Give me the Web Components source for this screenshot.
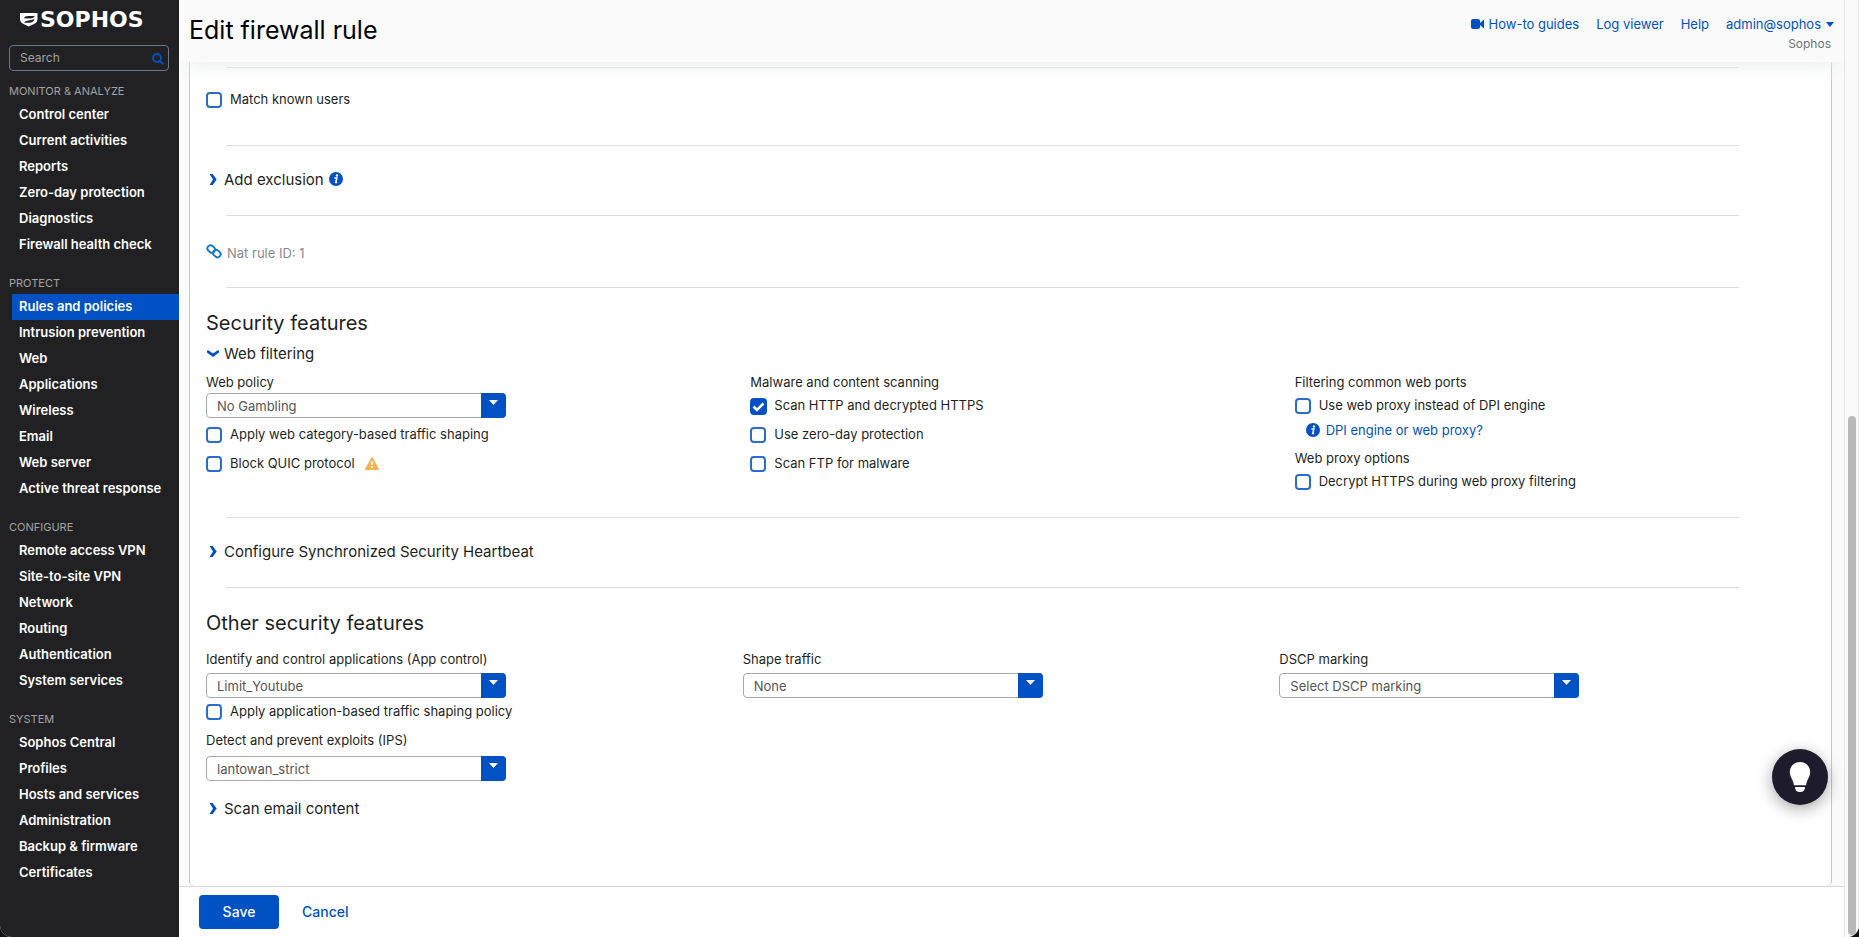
<!DOCTYPE html>
<html lang="en">
<head>
<meta charset="utf-8">
<meta name="viewport" content="width=device-width, initial-scale=1">
<title>Edit firewall rule</title>
<style>
  :root {
    --blue: #0052c4;
    --ink: #1d1f24;
    --muted: #8a8a8a;
    --side: #212124;
    --line: #dcdcdc;
  }
  body { margin: 0; background: #111; color: var(--ink); font: 13px/20px Inter, "Liberation Sans", sans-serif; }
</style>
</head>
<body>
<app-shell>
  <side-nav slot="nav">
    <nav-group label="MONITOR &amp; ANALYZE">
      <nav-item>Control center</nav-item>
      <nav-item>Current activities</nav-item>
      <nav-item>Reports</nav-item>
      <nav-item>Zero-day protection</nav-item>
      <nav-item>Diagnostics</nav-item>
      <nav-item>Firewall health check</nav-item>
    </nav-group>
    <nav-group label="PROTECT">
      <nav-item current>Rules and policies</nav-item>
      <nav-item>Intrusion prevention</nav-item>
      <nav-item>Web</nav-item>
      <nav-item>Applications</nav-item>
      <nav-item>Wireless</nav-item>
      <nav-item>Email</nav-item>
      <nav-item>Web server</nav-item>
      <nav-item>Active threat response</nav-item>
    </nav-group>
    <nav-group label="CONFIGURE">
      <nav-item>Remote access VPN</nav-item>
      <nav-item>Site-to-site VPN</nav-item>
      <nav-item>Network</nav-item>
      <nav-item>Routing</nav-item>
      <nav-item>Authentication</nav-item>
      <nav-item>System services</nav-item>
    </nav-group>
    <nav-group label="SYSTEM">
      <nav-item>Sophos Central</nav-item>
      <nav-item>Profiles</nav-item>
      <nav-item>Hosts and services</nav-item>
      <nav-item>Administration</nav-item>
      <nav-item>Backup &amp; firmware</nav-item>
      <nav-item>Certificates</nav-item>
    </nav-group>
  </side-nav>
  <page-header slot="header">Edit firewall rule</page-header>
  <rule-form slot="content"></rule-form>
  <action-bar slot="footer"></action-bar>
</app-shell>

<script>
const define = (name, html, setup) => {
  const template = document.createElement('template');
  template.innerHTML = html;
  customElements.define(name, class extends HTMLElement {
    connectedCallback() {
      if (this.shadowRoot) return;
      const root = this.attachShadow({ mode: 'open' });
      root.append(template.content.cloneNode(true));
      if (setup) setup(root, this);
    }
  });
};

define('app-shell', `
<style>
  :host { display: flex; height: 100vh; overflow: hidden; position: relative; border-radius: 0 0 12px 12px; background: #fafafa; }
  .side { flex: 0 0 179px; background: var(--side); position: relative; z-index: 2; }
  .main { flex: 1; min-width: 0; display: flex; flex-direction: column; }
  .content { flex: 1; min-height: 0; overflow: hidden; }
  .track { box-sizing: border-box; flex: 0 0 15px; display: flex; flex-direction: column; align-items: center; position: relative; z-index: 2;
    border: solid #e3e3e3; border-width: 0 1px; background: #fafafa; padding-bottom: 2px; }
  .before { flex: 416; }
  .thumb { flex: 519; width: 8px; border-radius: 4px; background: #b9b9b9; }
  help-bubble { position: absolute; right: 31px; bottom: 132px; z-index: 3; }
</style>
<div class="side"><slot name="nav"></slot></div>
<div class="main">
  <slot name="header"></slot>
  <div class="content"><slot name="content"></slot></div>
  <slot name="footer"></slot>
</div>
<div class="track"><div class="before"></div><div class="thumb"></div></div>
<help-bubble></help-bubble>`);

define('side-nav', `
<style>
  :host { display: block; }
  .brand { display: flex; align-items: center; gap: 2px; height: 31px; padding: 4px 0 0 20px; color: #fff;
    font: bold 22px/31px "DejaVu Sans", sans-serif; }
  .search { box-sizing: border-box; display: flex; align-items: center; width: 160px; height: 26px; margin: 10px 0 0 9px;
    padding: 0 4px 0 10px; border: 1px solid #6a7885; border-radius: 4px; }
  input { flex: 1; min-width: 0; padding: 0; border: 0; outline: 0; background: none; color: #ddd; font: 12px/20px Inter, sans-serif; }
  input::placeholder { color: #a0a0a0; opacity: 1; }
  .search svg { flex: none; margin-top: 1px; }
  nav { display: block; margin-top: -5px; }
</style>
<div class="brand">
  <svg width="18" height="14" viewBox="0 0 18 14" aria-hidden="true"><path fill="#fff" d="M0 0h17.500v6.500q0 2.800-3 4.200L8.700 13.600 3 10.700Q0 9.300 0 6.500z"/><path fill="#212124" d="M3.500 5.200Q5 3 8 3h7q-1.500 2.400-4.500 2.400zM14.500 6.200Q13 9.800 9.500 9.800H4q1.500-2.200 4.500-2.300z"/></svg>
  <span>SOPHOS</span>
</div>
<div class="search">
  <input type="text" placeholder="Search" aria-label="Search">
  <svg width="12" height="12" viewBox="0 0 12 12" fill="none" stroke="#0052c4" stroke-width="1.900" aria-hidden="true"><circle cx="5" cy="5" r="4"/><path d="M8 8l3.500 3.500"/></svg>
</div>
<nav><slot></slot></nav>`);

define('nav-group', `
<style>
  :host { display: block; }
  h2 { margin: 0; height: 20px; padding: 16px 0 0 9px; font: 11px/18px Inter, sans-serif; color: #a3a3a3; }
</style>
<h2></h2><slot></slot>`, (root, el) => { root.querySelector('h2').textContent = el.getAttribute('label'); });

define('nav-item', `
<style>
  :host { display: block; margin-left: 12px; }
  :host([current]) { background: var(--blue); }
  a { display: block; padding: 0 0 2px 7px; color: #fff; text-decoration: none; font: 600 13px/24px Inter, sans-serif; }
</style>
<a href="#"><slot></slot></a>`);

define('page-header', `
<style>
  :host { flex: none; display: flex; justify-content: space-between; box-sizing: border-box; height: 62px; padding: 0 10px 0 10px;
    background: #fafafa; position: relative; z-index: 1; box-shadow: 0 12px 20px -8px #e9eeec; }
  h1 { margin: 0; font: 400 25px/60px Inter, sans-serif; color: #000; }
  .right { padding-top: 14px; }
  .links { display: flex; gap: 17px; }
  a { display: flex; align-items: center; color: var(--blue); text-decoration: none; }
  .video { margin-right: 5px; }
  .caret { margin-left: 5px; }
  .tenant { padding-right: 3px; text-align: right; font-size: 12px; color: #6d7479; }
</style>
<h1><slot></slot></h1>
<div class="right">
  <div class="links">
    <a href="#"><svg class="video" width="13" height="10" viewBox="0 0 13 10" fill="currentColor" aria-hidden="true"><rect width="9" height="10" rx="2"/><path d="M9 4l4-3.500v9L9 6z"/></svg>How-to guides</a>
    <a href="#">Log viewer</a>
    <a href="#">Help</a>
    <a href="#">admin@sophos<svg class="caret" width="8" height="5" viewBox="0 0 8 5" fill="currentColor" aria-hidden="true"><path d="M0 0h8L4 5z"/></svg></a>
  </div>
  <div class="tenant">Sophos</div>
</div>`);

define('section-divider', `
<style>
  :host { display: block; margin: 23px 0 22px 20px; }
  hr { height: 1px; margin: 0; border: 0; background: var(--line); }
</style><hr>`);

define('info-icon', `
<style>:host { display: inline-flex; }</style>
<svg width="14" height="14" viewBox="0 0 14 14" aria-hidden="true"><circle cx="7" cy="7" r="7" fill="#0052c4"/><circle cx="8" cy="3.500" r="1.200" fill="#fff"/><path d="M5.400 6h2.500L6.700 10.600h1.500" fill="none" stroke="#fff" stroke-width="1.500"/></svg>`);

define('fold-heading', `
<style>
  :host { display: block; }
  h3 { margin: 0; font: inherit; }
  button { display: flex; align-items: center; height: 24px; padding: 0; border: 0; background: none; color: var(--ink); font: 15px/24px Inter, sans-serif; }
  svg { flex: none; width: 13px; height: 12px; margin: 0 5px 0 0; }
  ::slotted(info-icon) { margin: 0 0 2px 5px; }
  .down { display: none; }
  :host([open]) .down { display: block; }
  :host([open]) .right { display: none; }
</style>
<h3><button type="button">
  <svg class="right" viewBox="0 0 13 12" fill="#0052c4" aria-hidden="true"><path d="M3.500 0h3.200L10.700 5.500 6.700 11H3.500L7 5.500z"/></svg>
  <svg class="down" viewBox="0 0 13 12" fill="#0052c4" aria-hidden="true"><path d="M1 2.500h1.800L7 5.500l4.200-3H13v2L7 8.900 1 4.500z"/></svg>
  <slot></slot>
</button></h3>`);

define('check-field', `
<style>
  :host { display: block; height: 25px; }
  label { display: flex; align-items: flex-start; }
  input { appearance: none; box-sizing: border-box; flex: none; width: 16px; height: 16px; margin: 5px 8px 0 0;
    border: 2px solid #2b6cca; border-radius: 4px; background: #fff; }
  input:checked { width: 17px; height: 17px; margin-right: 7px; border-color: var(--blue);
    background: var(--blue) url("data:image/svg+xml,%3Csvg xmlns='http://www.w3.org/2000/svg' viewBox='0 0 13 13'%3E%3Cpath d='M1.500 6.500l3.500 3.500 6.500-6.500' fill='none' stroke='white' stroke-width='2.600'/%3E%3C/svg%3E") center / 13px 13px no-repeat; }
  span { line-height: 25px; }
</style>
<label><input type="checkbox"><span><slot></slot></span></label>`, (root, el) => {
  root.querySelector('input').checked = el.hasAttribute('checked');
});

define('select-field', `
<style>
  :host { display: block; }
  label { display: block; line-height: 20px; margin-bottom: var(--label-gap, 1px); }
  .box { display: flex; width: 300px; max-width: 100%; position: relative; }
  select { appearance: none; box-sizing: border-box; flex: 1; height: 25px; margin: 0; padding: 1px 30px 0 10px;
    border: 1px solid #a4a9af; border-radius: 4px; background: #fff; color: #555; font: 13px/20px Inter, sans-serif; }
  .arrow { position: absolute; right: 0; top: 0; width: 25px; height: 25px; background: var(--blue); border-radius: 0 4px 4px 0; pointer-events: none; }
  svg { display: block; margin: 7px 0 0 8px; }
</style>
<label for="s"></label>
<div class="box"><select id="s"><option></option></select>
<div class="arrow"><svg width="9" height="5" viewBox="0 0 9 5" fill="#fff" aria-hidden="true"><path d="M0 0h9L4.500 5z"/></svg></div></div>`, (root, el) => {
  root.querySelector('label').textContent = el.getAttribute('label');
  root.querySelector('option').textContent = el.getAttribute('value');
});

define('rule-form', `
<style>
  :host { display: block; height: 100%; padding: 0 12px 0 10px; box-sizing: border-box; }
  .panel { box-sizing: border-box; height: 100%; padding: 5px 15px 0 16px; border: 1px solid #c6c8ca; border-top: 0; border-bottom: 0; border-radius: 0 0 5px 5px; background: #fff; overflow: hidden; }
  section-divider { width: 94%; }
  section-divider.first { margin-top: 0; margin-bottom: 19px; }
  .match { margin-bottom: 33px; }
  h2 { margin: 0; font: 400 20px/26px Inter, sans-serif; color: var(--ink); }
  .nat { display: flex; align-items: center; gap: 5px; height: 26px; margin-bottom: 23px; color: var(--muted); }
  .nat span { padding-top: 3px; }
  .web { display: grid; grid-template-columns: repeat(3, minmax(0, 1fr)); column-gap: 23px; }
  .stack { display: flex; flex-direction: column; gap: 4px; }
  .group { line-height: 20px; margin: 0 0 1px; }
  .stack .group { margin-bottom: -3px; }
  .top { margin: 6px 0; }
  .warn { margin-left: 10px; vertical-align: -2px; }
  .hint { display: flex; align-items: center; gap: 6px; height: 24px; margin: 0 0 6px 11px; }
  a { color: var(--blue); text-decoration: none; }
  .other { display: grid; grid-template-columns: repeat(3, minmax(0, 1fr)); margin-top: 13px; --label-gap: 4px; }
  .other check-field { margin: 1px 0 6px; }
  .ips { --label-gap: 6px; margin-bottom: 16px; }
</style>
<div class="panel">
  <section-divider class="first"></section-divider>
  <check-field class="match">Match known users</check-field>
  <section-divider></section-divider>
  <fold-heading>Add exclusion<info-icon></info-icon></fold-heading>
  <section-divider></section-divider>
  <div class="nat">
    <svg width="16" height="15" viewBox="0 0 16 15" fill="none" stroke="#1479d0" stroke-width="1.900" aria-hidden="true"><rect x="-4" y="-3.100" width="8" height="6.200" rx="3.100" transform="translate(5.200 5) rotate(40)"/><rect x="-4" y="-3.100" width="8" height="6.200" rx="3.100" transform="translate(10.800 9.600) rotate(40)"/></svg>
    <span>Nat rule ID: 1</span>
  </div>
  <section-divider></section-divider>
  <h2>Security features</h2>
  <fold-heading open class="top">Web filtering</fold-heading>
  <div class="web">
    <div class="stack">
      <select-field label="Web policy" value="No Gambling"></select-field>
      <check-field>Apply web category-based traffic shaping</check-field>
      <check-field>Block QUIC protocol<svg class="warn" width="14" height="13" viewBox="0 0 14 13" aria-hidden="true"><path d="M7 .8L13.200 12.200H.8z" fill="#fbb050" stroke="#fbb050" stroke-width="1.400" stroke-linejoin="round"/><path d="M7 4v4M7 9.300v1.700" stroke="#fff" stroke-width="1.800"/></svg></check-field>
    </div>
    <div class="stack">
      <p class="group">Malware and content scanning</p>
      <check-field checked>Scan HTTP and decrypted HTTPS</check-field>
      <check-field>Use zero-day protection</check-field>
      <check-field>Scan FTP for malware</check-field>
    </div>
    <div>
      <p class="group">Filtering common web ports</p>
      <check-field>Use web proxy instead of DPI engine</check-field>
      <div class="hint"><info-icon></info-icon><a href="#">DPI engine or web proxy?</a></div>
      <p class="group">Web proxy options</p>
      <check-field>Decrypt HTTPS during web proxy filtering</check-field>
    </div>
  </div>
  <section-divider></section-divider>
  <fold-heading>Configure Synchronized Security Heartbeat</fold-heading>
  <section-divider></section-divider>
  <h2>Other security features</h2>
  <div class="other">
    <div>
      <select-field label="Identify and control applications (App control)" value="Limit_Youtube"></select-field>
      <check-field>Apply application-based traffic shaping policy</check-field>
      <select-field class="ips" label="Detect and prevent exploits (IPS)" value="lantowan_strict"></select-field>
    </div>
    <select-field label="Shape traffic" value="None"></select-field>
    <select-field label="DSCP marking" value="Select DSCP marking"></select-field>
  </div>
  <fold-heading>Scan email content</fold-heading>
</div>`);

define('action-bar', `
<style>
  :host { flex: none; display: flex; align-items: flex-start; gap: 23px; box-sizing: border-box; height: 51px; padding: 8px 20px 0; border-top: 1px solid #d6d8da; background: #fff; }
  button { height: 34px; margin: 0; padding: 0; border: 0; border-radius: 4px; background: none; color: var(--blue); font: 500 14px/34px Inter, sans-serif; }
  .save { width: 80px; background: var(--blue); color: #fff; }
</style>
<button type="button" class="save">Save</button><button type="button">Cancel</button>`);

define('help-bubble', `
<style>
  :host { display: block; }
  button { display: grid; place-items: center; width: 56px; height: 56px; padding: 0; border: 0; border-radius: 50%; background: #1e1c2c; box-shadow: 0 4px 16px rgba(0,0,0,.35); }
</style>
<button type="button" aria-label="Tips"><svg width="22" height="30" viewBox="0 0 22 30" fill="#fff" aria-hidden="true"><path d="M11 0C17 0 21.200 4.600 21.200 10c0 4.500-3.200 7.500-4.200 13.200H5C4 17.500.8 14.500.8 10 .8 4.600 5 0 11 0zM6 25h10q0 5-5 5t-5-5z"/></svg></button>`);
</script>
</body>
</html>
